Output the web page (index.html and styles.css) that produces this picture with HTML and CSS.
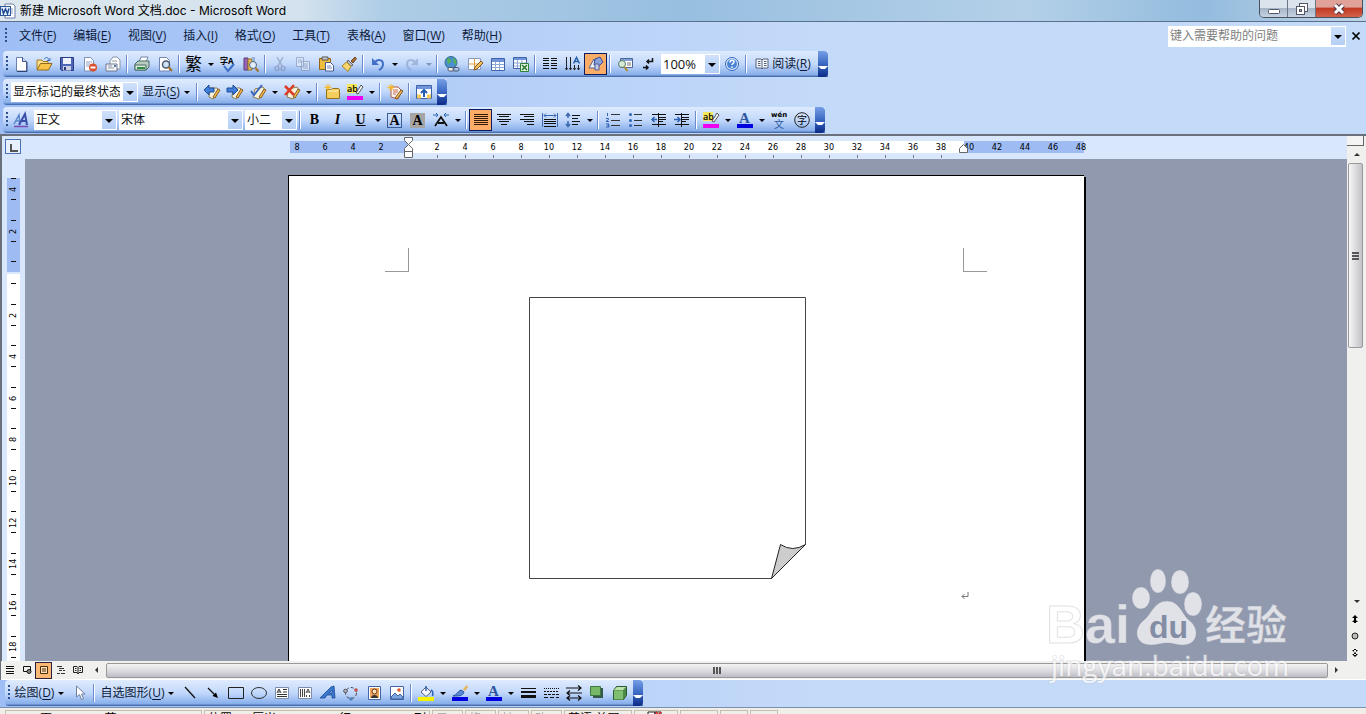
FILE: index.html
```html
<!DOCTYPE html>
<html lang="zh-CN">
<head>
	<meta charset="UTF-8">
	<title>新建 Microsoft Word 文档.doc - Microsoft Word</title>
	<link rel="stylesheet" href="styles.css">
</head>
<body>
	<header class="titlebar">
		<svg class="appicon" viewBox="0 0 16 16"><path d="M5 1h8l2 2v12H5z" fill="#fff" stroke="#6b7fa6"/><path d="M8 6h5M8 8h5M8 10h5" stroke="#8fa3c8"/><rect x=".5" y="3.500" width="10" height="9" fill="#e6eefb" stroke="#2b579a"/><path d="M2 5.500l1.500 5L5.500 6l2 4.500 1.500-5" fill="none" stroke="#1f4a94" stroke-width="1.500"/></svg>
		<h1>新建 Microsoft Word 文档.doc - Microsoft Word</h1>
		<div class="winbtns">
			<button aria-label="最小化"><svg viewBox="0 0 16 16"><rect x="2.500" y="8.500" width="11" height="4" rx="1" fill="#fff" stroke="#535666"/></svg></button>
			<button aria-label="还原"><svg viewBox="0 0 16 16"><rect x="5.500" y="2.500" width="8" height="8" fill="#fff" stroke="#535666"/><rect x="2.500" y="5.500" width="8" height="8" fill="#fff" stroke="#535666"/><rect x="5.500" y="8.500" width="2" height="2" fill="#aaa" stroke="#535666"/></svg></button>
			<button class="close" aria-label="关闭"><svg viewBox="0 0 16 16"><path d="M4 4l8 8M12 4l-8 8" stroke="#54384a" stroke-width="5"/><path d="M4 4l8 8M12 4l-8 8" stroke="#fff" stroke-width="3"/></svg></button>
		</div>
	</header>

	<div class="dock">
		<nav class="menubar">
			<i class="grip"></i>
			<a href="#">文件(<u>F</u>)</a>
			<a href="#">编辑(<u>E</u>)</a>
			<a href="#">视图(<u>V</u>)</a>
			<a href="#">插入(<u>I</u>)</a>
			<a href="#">格式(<u>O</u>)</a>
			<a href="#">工具(<u>T</u>)</a>
			<a href="#">表格(<u>A</u>)</a>
			<a href="#">窗口(<u>W</u>)</a>
			<a href="#">帮助(<u>H</u>)</a>
			<span class="combo ask"><input type="text" placeholder="键入需要帮助的问题" aria-label="键入需要帮助的问题"></span>
			<button class="docclose" aria-label="关闭文档"><svg viewBox="0 0 16 16"><path d="M4 4l8 8M12 4l-8 8" stroke="#000" stroke-width="2"/></svg></button>
		</nav>

		<!-- 常用 -->
		<div class="toolbar">
			<i class="grip"></i>
			<button aria-label="新建"><svg viewBox="0 0 16 16"><path d="M3.500 1.500h6l4 4v9.500h-10z" fill="#fff" stroke="#6a7fae"/><path d="M9.500 1.500v4h4" fill="#cfdcf5" stroke="#3f558c"/><path d="M4 15.500h10V6" stroke="#2e4377" fill="none"/></svg></button>
			<button aria-label="打开"><svg viewBox="0 0 16 16"><path d="M1 13V4h5l1 1.500h5V8" fill="#fbe08c" stroke="#a77b22"/><path d="M1 14l3.500-6.500H16L12.500 14z" fill="#f9c449" stroke="#96681b"/><path d="M8 3c2-2 4-2 5 1m1-2v2.500h-3" fill="none" stroke="#3c6fc0"/></svg></button>
			<button aria-label="保存"><svg viewBox="0 0 16 16"><path d="M1.500 1.500h13v13h-12l-1-1z" fill="#4d66b8" stroke="#2b3c84"/><path d="M4 2h8v6H4z" fill="#eef3ff"/><path d="M4 10h8v4.500H4z" fill="#cbd2e4"/><path d="M5 11h2v3H5z" fill="#26367b"/></svg></button>
			<button aria-label="权限"><svg viewBox="0 0 16 16"><path d="M2.500 1.500h6l3 3V15h-9z" fill="#fff" stroke="#7d8fb8"/><path d="M4 6h6M4 8h4M4 10h3" stroke="#8fa3c8"/><circle cx="11" cy="11.500" r="4" fill="#d9512c"/><path d="M8.500 11.500h5" stroke="#fff" stroke-width="2"/></svg></button>
			<button aria-label="电子邮件"><svg viewBox="0 0 16 16"><path d="M5 5l3-4h4l3 3v9H5z" fill="#fff" stroke="#8b93a7"/><path d="M1 8h11v7H1z" fill="#f4f6fa" stroke="#6c7690"/><path d="M3 10h4M3 12h6M7 5h5" stroke="#8b93a7"/><path d="M9 9h2v2H9z" fill="#5e78a8"/></svg></button>
			<i class="sep"></i>
			<button aria-label="打印"><svg viewBox="0 0 16 16"><path d="M5 6l2-5h7l-2 5z" fill="#fff" stroke="#7285a0"/><path d="M1 8l3-3h11v6l-3 3H1z" fill="#b7cdbf" stroke="#4a6a65"/><path d="M1 9h11v5H1z" fill="#dce9e0" stroke="#4a6a65"/><path d="M3 12h8" stroke="#2d9143" stroke-width="2"/></svg></button>
			<button aria-label="打印预览"><svg viewBox="0 0 16 16"><path d="M2.500 1.500h7l3 3V15h-10z" fill="#fff" stroke="#7285b0"/><circle cx="9" cy="8.500" r="3.500" fill="#cfe3f6" stroke="#4d5b70" stroke-width="1.500"/><path d="M11.500 11l3.500 4" stroke="#a4712a" stroke-width="2"/></svg></button>
			<i class="sep"></i>
			<button class="fan" aria-label="中文简繁转换">繁</button>
			<button class="drop" aria-label="更多"></button>
			<button aria-label="拼写和语法"><svg viewBox="0 0 16 16"><text x="0" y="8" class="tiny">字A</text><path d="M4 10l4 5 6-7" fill="none" stroke="#3b6cc4" stroke-width="2"/></svg></button>
			<button aria-label="信息检索"><svg viewBox="0 0 16 16"><path d="M1 2h4v12H1z" fill="#9a64b6" stroke="#5d3a78"/><path d="M5 3h4v11H5z" fill="#e8bf55" stroke="#97742a"/><path d="M9 1h3v8H9z" fill="#98b2dc"/><circle cx="10" cy="9" r="3.500" fill="#e2effb" stroke="#52627c"/><path d="M12.500 12l3 3.500" stroke="#a4712a" stroke-width="2"/></svg></button>
			<i class="sep"></i>
			<button class="off" aria-label="剪切"><svg viewBox="0 0 16 16"><path d="M5 1l5 9M11 1l-5 9" stroke="#8799bb" stroke-width="1.500"/><circle cx="5" cy="12.500" r="2" fill="none" stroke="#8799bb" stroke-width="1.500"/><circle cx="11" cy="12.500" r="2" fill="none" stroke="#8799bb" stroke-width="1.500"/></svg></button>
			<button class="off" aria-label="复制"><svg viewBox="0 0 16 16"><path d="M1.500 1.500h7v9h-7zM6.500 5.500h8v9h-8z" fill="#e2ebf8" stroke="#8799bb"/><path d="M3 4h4M3 6h3M8 8h5M8 10h5M8 12h5" stroke="#8799bb"/></svg></button>
			<button aria-label="粘贴"><svg viewBox="0 0 16 16"><path d="M1.500 2.500h11v11h-11z" fill="#efbd3e" stroke="#94661a"/><path d="M4 1h6v3H4z" fill="#c8c8c8" stroke="#555"/><path d="M7.500 6.500h5l3 3V15h-8z" fill="#fff" stroke="#475c93"/><path d="M9 10h4M9 12h5" stroke="#6e86c0"/></svg></button>
			<button aria-label="格式刷"><svg viewBox="0 0 16 16"><path d="M10 5l4-4 1.500 1.500L12 7z" fill="#a86b31" stroke="#70431b"/><path d="M7 4l5 5-2 1-4-4z" fill="#b9bfca" stroke="#666"/><path d="M5.500 6l4.500 4.500-3 5L1 10z" fill="#f6d56c" stroke="#a98326"/></svg></button>
			<i class="sep"></i>
			<button aria-label="撤消"><svg viewBox="0 0 16 16"><path d="M4 7c4-5 9-3 9 1 0 3-2 5-4 6" fill="none" stroke="#416fc8" stroke-width="2"/><path d="M2 2v7h7z" fill="#416fc8"/></svg></button>
			<button class="drop" aria-label="更多"></button>
			<button class="off" aria-label="恢复"><svg viewBox="0 0 16 16"><path d="M12 7C8 2 3 4 3 8c0 3 2 5 4 6" fill="none" stroke="#8fa6cf" stroke-width="2"/><path d="M14 2v7H7z" fill="#8fa6cf"/></svg></button>
			<button class="drop off" aria-label="更多"></button>
			<i class="sep"></i>
			<button aria-label="插入超链接"><svg viewBox="0 0 16 16"><circle cx="7" cy="6.500" r="6" fill="#4b8fcf" stroke="#336a8a"/><path d="M3 3c3-2 4 0 4 2s-3 2-3 4M9 2c3 1 4 4 3 7-2-1-3-4-3-7" fill="#52b257"/><rect x="4" y="11.500" width="6" height="3.500" rx="1.500" fill="#eee" stroke="#4b5468"/><rect x="9" y="11.500" width="6" height="3.500" rx="1.500" fill="none" stroke="#4b5468"/></svg></button>
			<button aria-label="表格和边框"><svg viewBox="0 0 16 16"><path d="M1.500 2.500h12v11h-12z" fill="#fff" stroke="#8d99b8"/><path d="M7.500 3v10M2 8h11" stroke="#e0a040"/><path d="M7 14l1-3 6-6 2 2-6 6z" fill="#f2c15b" stroke="#84551c"/></svg></button>
			<button aria-label="插入表格"><svg viewBox="0 0 16 16"><path d="M1.500 2.500h13v12h-13z" fill="#fff" stroke="#3f62a8"/><path d="M2 3h12v3H2z" fill="#6f94da"/><path d="M5.500 6v8M9.500 6v8M2 8.500h12M2 11.500h12" stroke="#8ea8d8"/></svg></button>
			<button aria-label="插入 Excel 表格"><svg viewBox="0 0 16 16"><path d="M.5 1.500h13v11H.5z" fill="#fff" stroke="#3f62a8"/><path d="M1 2h12v2H1z" fill="#6f94da"/><path d="M4.500 4v8M9 4v8M1 7h12M1 10h12" stroke="#8ea8d8"/><path d="M7.500 7.500h8v8h-8z" fill="#e5f3e4" stroke="#2f7f37"/><path d="M9 9l5 5M14 9l-5 5" stroke="#24792d" stroke-width="1.500"/></svg></button>
			<i class="sep"></i>
			<button aria-label="分栏"><svg viewBox="0 0 16 16"><path d="M1 2.500h6M1 4.500h6M1 7.500h6M1 9.500h6M1 12.500h6M9 2.500h6M9 4.500h6M9 7.500h6M9 9.500h6M9 12.500h6" stroke="#111"/></svg></button>
			<button aria-label="更改文字方向"><svg viewBox="0 0 16 16"><path d="M1.500 1v13M5.500 1v13M9.500 9v5M13.500 9v5M.5 12l1 2 1-2M4.500 12l1 2 1-2M8.500 12l1 2 1-2M12.500 12l1 2 1-2" fill="none" stroke="#222"/><path d="M8.500 7.500l3-6 3 6M9.500 5.500h4" fill="none" stroke="#2860a8" stroke-width="1.500"/></svg></button>
			<button class="on" aria-label="绘图"><svg viewBox="0 0 16 16"><path d="M1 12L6 3l3 9z" fill="#f0f2fa" stroke="#56648f"/><path d="M7 3l5-2 3 5-4 4-5-1z" fill="#8ba1dc" stroke="#3d4f8e"/><path d="M7 8h4v6H7z" fill="#c3cbea" stroke="#50609a"/></svg></button>
			<i class="sep"></i>
			<button aria-label="文档结构图"><svg viewBox="0 0 16 16"><path d="M3.500 2.500h12v9h-12z" fill="#fff" stroke="#4d6690"/><path d="M4 3h11v2H4z" fill="#7fa0d8"/><path d="M10 7h4M10 9h4" stroke="#777"/><circle cx="5" cy="8" r="3.500" fill="#d6ecd6" stroke="#5a7a6a"/><path d="M7.500 11l3 4" stroke="#b58a32" stroke-width="2"/></svg></button>
			<button aria-label="显示/隐藏编辑标记"><svg viewBox="0 0 16 16"><path d="M12.500 2v3.500H7m2-2L7 5.500l2 2M3 11.500h5M6 9.500l2 2-2 2" fill="none" stroke="#111" stroke-width="1.500"/></svg></button>
			<span class="combo zoom"><select aria-label="显示比例"><option>100%</option></select></span>
			<button aria-label="帮助"><svg viewBox="0 0 16 16"><circle cx="8" cy="8" r="6.500" fill="#e4efff" stroke="#2e66b8"/><circle cx="8" cy="8" r="5" fill="#4b84d4"/><path d="M6 6.500c0-3 4-3 4-.5 0 1.500-2 1.500-2 3" fill="none" stroke="#fff" stroke-width="1.500"/><path d="M7.200 10.500h1.600v1.500H7.200z" fill="#fff"/></svg></button>
			<i class="sep"></i>
			<button class="text read"><svg viewBox="0 0 16 16"><path d="M2 3h5l1 1 1-1h5v9H9l-1 1-1-1H2z" fill="#f5f7fc" stroke="#55617c"/><path d="M8 4v9M4 5.500h2.500M4 7.500h2.500M4 9.500h2.500M10 5.500h2.500M10 7.500h2.500M10 9.500h2.500" stroke="#55617c"/></svg><span>阅读(<u>R</u>)</span></button>
			<button class="more" aria-label="工具栏选项"></button>
		</div>

		<!-- 审阅 -->
		<div class="toolbar">
			<i class="grip"></i>
			<span class="combo review"><select aria-label="显示以审阅"><option>显示标记的最终状态</option></select></span>
			<button class="text caret show"><span>显示(<u>S</u>)</span></button>
			<i class="sep"></i>
			<button aria-label="前一处修订"><svg viewBox="0 0 16 16"><path d="M6 4h7l2 2-6 9-4-2z" fill="#f6f2dc" stroke="#8c7b50"/><path d="M9 13l5-8 2 1-5 8z" fill="#efb94c" stroke="#8b5d21"/><path d="M0 6l5-5v3h5v4H5v3z" fill="#3f7fdb" stroke="#1c4a97"/></svg></button>
			<button aria-label="后一处修订"><svg viewBox="0 0 16 16"><path d="M6 4h7l2 2-6 9-4-2z" fill="#f6f2dc" stroke="#8c7b50"/><path d="M9 13l5-8 2 1-5 8z" fill="#efb94c" stroke="#8b5d21"/><path d="M11 6L6 1v3H0v4h6v3z" fill="#3f7fdb" stroke="#1c4a97"/></svg></button>
			<button aria-label="接受所选修订"><svg viewBox="0 0 16 16"><path d="M5 5l8-2 2 3-6 9-6-2z" fill="#f6f2dc" stroke="#8c7b50"/><path d="M9 13l5-8 2 1-5 8z" fill="#efb94c" stroke="#8b5d21"/><path d="M1 7l3 4 8-10" fill="none" stroke="#3a66c0" stroke-width="2"/></svg></button>
			<button class="drop" aria-label="更多"></button>
			<button aria-label="拒绝所选修订"><svg viewBox="0 0 16 16"><path d="M5 5l8-2 2 3-6 9-6-2z" fill="#f6f2dc" stroke="#8c7b50"/><path d="M9 13l5-8 2 1-5 8z" fill="#efb94c" stroke="#8b5d21"/><path d="M1 2l9 9M10 1L1 11" stroke="#de3b25" stroke-width="2.500"/></svg></button>
			<button class="drop" aria-label="更多"></button>
			<i class="sep"></i>
			<button aria-label="插入批注"><svg viewBox="0 0 16 16"><path d="M2.500 5.500h5l1-1h6l1 1v9h-13z" fill="#f5cd5c" stroke="#94701f"/><path d="M4 7h10" stroke="#fff4b8"/><path d="M4 0v7M.5 3.500h7M1.500 1l5 5M6.500 1l-5 5" stroke="#f6b923"/></svg></button>
			<button aria-label="突出显示"><svg viewBox="0 0 16 16"><path d="M0 0h10v9H0z" fill="#f5e85b"/><text x="0" y="8" class="ab">ab</text><path d="M9 9l5-8 2 2-5 7z" fill="#f4f4f4" stroke="#555"/><path d="M0 12h16v4H0z" fill="#f000f0"/></svg></button>
			<button class="drop" aria-label="更多"></button>
			<i class="sep"></i>
			<button aria-label="修订"><svg viewBox="0 0 16 16"><path d="M4 3h7l4 4-4 8-7-2z" fill="#fff5f0" stroke="#b05c48"/><path d="M6 6h5M6 8h5M6 10h3" stroke="#c76b56"/><path d="M8 14l6-8 2 1-6 8z" fill="#f2c15b" stroke="#84551c"/><path d="M4 0v7M.5 3.500h7M1.500 1l5 5M6.500 1l-5 5" stroke="#f6b923"/></svg></button>
			<i class="sep"></i>
			<button aria-label="审阅窗格"><svg viewBox="0 0 16 16"><path d="M.5 1.500h15v13H.5z" fill="#fff" stroke="#3c61a8"/><path d="M1 2h14v3H1z" fill="#6f94da"/><path d="M1 10.500h4v4H1zM11 10.500h4v4h-4z" fill="#f5cd5c"/><path d="M8 13V7M5 9l3-3 3 3" fill="none" stroke="#275cb4" stroke-width="2"/></svg></button>
			<button class="more" aria-label="工具栏选项"></button>
		</div>

		<!-- 格式 -->
		<div class="toolbar">
			<i class="grip"></i>
			<button aria-label="格式窗格"><svg viewBox="0 0 16 16"><path d="M1 12L6 3l1 9M3 9h4" fill="none" stroke="#5c86cc" stroke-width="1.500"/><path d="M6 13l6-11 2 11M8.500 9H13" fill="none" stroke="#3c4fa8" stroke-width="2"/><path d="M1 14.500h14" stroke="#7a4bb0" stroke-width="1.500"/></svg></button>
			<span class="combo style"><select aria-label="样式"><option>正文</option></select></span>
			<span class="combo font"><select aria-label="字体"><option>宋体</option></select></span>
			<span class="combo size"><select aria-label="字号"><option>小二</option></select></span>
			<i class="sep"></i>
			<button class="glyph b">B</button>
			<button class="glyph i">I</button>
			<button class="glyph un">U</button>
			<button class="drop" aria-label="更多"></button>
			<button class="glyph"><span class="boxed">A</span></button>
			<button class="glyph"><span class="shaded">A</span></button>
			<button aria-label="字符缩放"><svg viewBox="0 0 16 16"><path d="M2 14l6-9 6 9M5 11h6" fill="none" stroke="#111" stroke-width="1.800"/><path d="M0 3h5M3 1l2 2-2 2M16 3h-5M13 1l-2 2 2 2" fill="none" stroke="#2766b8"/></svg></button>
			<button class="drop" aria-label="更多"></button>
			<i class="sep"></i>
			<button class="on" aria-label="两端对齐"><svg viewBox="0 0 16 16"><path d="M1 2.500h14M1 4.500h14M1 6.500h14M1 8.500h14M1 10.500h14M1 12.500h14" stroke="#331a08"/></svg></button>
			<button aria-label="居中"><svg viewBox="0 0 16 16"><path d="M1 2.500h14M3 4.500h10M1 7.500h14M3 9.500h10M5 12.500h6" stroke="#111"/></svg></button>
			<button aria-label="右对齐"><svg viewBox="0 0 16 16"><path d="M1 2.500h14M5 4.500h10M1 7.500h14M5 9.500h10M8 12.500h7" stroke="#111"/></svg></button>
			<button aria-label="分散对齐"><svg viewBox="0 0 16 16"><path d="M.5 1v14M15.500 1v14" stroke="#3b68b0"/><path d="M2 3.500h12M4 1.500l-2 2 2 2M12 1.500l2 2-2 2" fill="none" stroke="#3b68b0"/><path d="M2 7.500h12M2 9.500h12M2 11.500h12M2 14.500h12" stroke="#111"/></svg></button>
			<button aria-label="行距"><svg viewBox="0 0 16 16"><path d="M3 2v4M3 9v5M1 4l2-2.500L5 4M1 12l2 2.500L5 12" fill="none" stroke="#3b68b0" stroke-width="1.500"/><path d="M7 3.500h8M7 6.500h6M7 9.500h8M7 12.500h6" stroke="#111"/></svg></button>
			<button class="drop" aria-label="更多"></button>
			<i class="sep"></i>
			<button aria-label="编号"><svg viewBox="0 0 16 16"><path d="M2.500 1v3M1 6.500h2.500v1L1 9.500h3M1 12h3l-1.500 1.500H4V15H1" fill="none" stroke="#2d62b4"/><path d="M6 2.500h9M6 8.500h9M6 13.500h9" stroke="#333"/></svg></button>
			<button aria-label="项目符号"><svg viewBox="0 0 16 16"><circle cx="2.500" cy="2.500" r="1.500" fill="#2d62b4"/><circle cx="2.500" cy="8.500" r="1.500" fill="#2d62b4"/><circle cx="2.500" cy="13.500" r="1.500" fill="#2d62b4"/><path d="M6 2.500h8M6 8.500h8M6 13.500h8" stroke="#333"/></svg></button>
			<button aria-label="减少缩进量"><svg viewBox="0 0 16 16"><path d="M1 2.500h14M8 5.500h7M8 7.500h7M8 9.500h4M1 12.500h14M7.500 1v14" stroke="#111"/><path d="M6 7.500H1M3.500 5L1 7.500 3.500 10" fill="none" stroke="#2d62b4" stroke-width="1.500"/></svg></button>
			<button aria-label="增加缩进量"><svg viewBox="0 0 16 16"><path d="M1 2.500h14M8 5.500h7M8 7.500h7M8 9.500h4M1 12.500h14M7.500 1v14" stroke="#111"/><path d="M0 7.500h6M3.500 5L6 7.500 3.500 10" fill="none" stroke="#2d62b4" stroke-width="1.500"/></svg></button>
			<i class="sep"></i>
			<button aria-label="突出显示"><svg viewBox="0 0 16 16"><path d="M0 0h10v9H0z" fill="#f5e85b"/><text x="0" y="8" class="ab">ab</text><path d="M9 9l5-8 2 2-5 7z" fill="#f4f4f4" stroke="#555"/><path d="M0 12h16v4H0z" fill="#f000f0"/></svg></button>
			<button class="drop" aria-label="更多"></button>
			<button aria-label="字体颜色"><svg viewBox="0 0 16 16"><text x="2" y="11" class="bigA">A</text><path d="M0 12h16v4H0z" fill="#0000e0"/></svg></button>
			<button class="drop" aria-label="更多"></button>
			<button aria-label="拼音指南"><svg viewBox="0 0 16 16"><text x="0" y="5" class="wen">wén</text><text x="3" y="16" class="wz">文</text></svg></button>
			<button aria-label="带圈字符"><svg viewBox="0 0 16 16"><circle cx="8" cy="8" r="7.300" fill="none" stroke="#222"/><text x="3" y="12" class="zi">字</text></svg></button>
			<button class="more" aria-label="工具栏选项"></button>
		</div>
	</div>

	<main class="work">
		<div class="corner"><span class="tabstop"></span></div>
		<div class="hruler">
			<div class="hz out left"><b>8</b><b>6</b><b>4</b><b>2</b>
				<svg class="indent" viewBox="0 0 10 22"><path d="M.5.500h8v3l-4 4-4-4zM.5 14.500v-3l4-4 4 4v3zM.5 14.500h8v6h-8z" fill="#fff" stroke="#666"/></svg>
			</div>
			<div class="hz mid"><b>2</b><b>4</b><b>6</b><b>8</b><b>10</b><b>12</b><b>14</b><b>16</b><b>18</b><b>20</b><b>22</b><b>24</b><b>26</b><b>28</b><b>30</b><b>32</b><b>34</b><b>36</b><b>38</b></div>
			<div class="hz out right"><b>40</b><b>42</b><b>44</b><b>46</b><b>48</b>
				<svg class="rindent" viewBox="0 0 10 10"><path d="M.5 8.500v-4l4-4 4 4v4z" fill="#fff" stroke="#666"/></svg>
			</div>
		</div>
		<div class="vscroll">
			<span class="split"></span>
			<button class="arr up" aria-label="向上"></button>
			<span class="thumb"><i class="bars"></i></span>
			<span class="track"></span>
			<button class="arr down" aria-label="向下"></button>
			<button class="nav" aria-label="前一页"><svg viewBox="0 0 10 10"><path d="M5 1l3 3H2zM5 5l3 3H2zM4 3h2v6H4z"/></svg></button>
			<button class="nav" aria-label="选择浏览对象"><svg viewBox="0 0 10 10"><circle cx="5" cy="5" r="3" fill="#bbb" stroke="#222"/></svg></button>
			<button class="nav" aria-label="下一页"><svg viewBox="0 0 10 10"><path d="M5 5l3-3H2zM5 9l3-3H2zM4 1h2v6H4z"/></svg></button>
		</div>
		<div class="vruler">
			<div class="vz out"><b>4</b><b>2</b><b class="half"></b></div>
			<div class="vz"><b class="half"></b><b>2</b><b>4</b><b>6</b><b>8</b><b>10</b><b>12</b><b>14</b><b>16</b><b>18</b></div>
		</div>
		<div class="canvas">
			<div class="page">
				<div class="marks"><i class="ml"></i><i class="mr"></i></div>
				<svg class="note" viewBox="0 0 278 283"><path d="M.5.500h276v247l-34 34H.5z" fill="#fff" stroke="#444"/><path d="M242.500 281.500l9-34q12 8 25 0z" fill="#cdcdcd" stroke="#222"/></svg>
				<svg class="ret" viewBox="0 0 8 8"><path d="M7 0v4.500H1M3.500 2L1 4.500 3.500 7" fill="none" stroke="#777"/></svg>
			</div>
		</div>
		<div class="hscroll">
			<button aria-label="普通视图"><svg viewBox="0 0 10 10"><path d="M1 1.500h8M1 3.500h8M1 6.500h8M1 8.500h8" stroke="#111"/></svg></button>
			<button aria-label="Web 版式视图"><svg viewBox="0 0 10 10"><path d="M1.500 1.500h7v5h-7z" fill="none" stroke="#111"/><circle cx="7" cy="6.500" r="2" fill="#888" stroke="#111"/></svg></button>
			<button class="on" aria-label="页面视图"><svg viewBox="0 0 10 10"><path d="M1.500 1.500h7v7h-7z" fill="#ffe2ba" stroke="#4a2d08"/><path d="M3 4h4M3 6h4" stroke="#4a2d08"/></svg></button>
			<button aria-label="大纲视图"><svg viewBox="0 0 10 10"><path d="M1 1.500h5M3 3.500h5M7 5.500h2M3 5.500h3M1 8.500h3M5 8.500h4" stroke="#333"/></svg></button>
			<button aria-label="阅读版式"><svg viewBox="0 0 10 10"><path d="M.5 1.500H4l1 1 1-1h3.500v6H6l-1 1.500-1-1.500H.5zM5 2.500v6M2 3.500h1.500M2 5.500h1.500M6.500 3.500H8M6.500 5.500H8" fill="none" stroke="#222"/></svg></button>
			<button class="arr prev" aria-label="向左"></button>
			<span class="thumb"><i class="bars"></i></span>
			<button class="arr next" aria-label="向右"></button>
		</div>
	</main>

	<!-- 绘图 -->
	<div class="drawdock">
		<div class="toolbar">
			<i class="grip"></i>
			<button class="text caret draw"><span>绘图(<u>D</u>)</span></button>
			<button aria-label="选择对象"><svg viewBox="0 0 16 16"><path d="M4.500 1v11l3-2.500 2 5 2-1-2-4.500h3.500z" fill="#fff" stroke="#6f7f9d"/></svg></button>
			<i class="sep"></i>
			<button class="text caret shapes"><span>自选图形(<u>U</u>)</span></button>
			<button aria-label="直线"><svg viewBox="0 0 16 16"><path d="M3 2l10 11" stroke="#111" stroke-width="1.300"/></svg></button>
			<button aria-label="箭头"><svg viewBox="0 0 16 16"><path d="M3 3l8 8" stroke="#111" stroke-width="1.300"/><path d="M13 13L7.500 11l3.500-3.500z"/></svg></button>
			<button aria-label="矩形"><svg viewBox="0 0 16 16"><path d="M.5 2.500h15v11H.5z" fill="none" stroke="#222"/></svg></button>
			<button aria-label="椭圆"><svg viewBox="0 0 16 16"><ellipse cx="8" cy="8" rx="7.500" ry="5.500" fill="none" stroke="#333"/></svg></button>
			<button aria-label="文本框"><svg viewBox="0 0 16 16"><path d="M1.500 2.500h13v11h-13z" fill="#fff" stroke="#7d8bac"/><path d="M3 8l2-4 2 4M4 7h2M9 4.500h4M9 7h4M3 9.500h10M3 11.500h10" fill="none" stroke="#333"/></svg></button>
			<button aria-label="竖排文本框"><svg viewBox="0 0 16 16"><path d="M1.500 2.500h13v11h-13z" fill="#fff" stroke="#7d8bac"/><path d="M9 8l2-4 2 4M10 7h2M3.500 4v8M5.500 4v8M7.500 4v8M9.500 10v2M12.500 10v2" fill="none" stroke="#444"/></svg></button>
			<button aria-label="艺术字"><svg viewBox="0 0 16 16"><path d="M0 13L11 2l3-1 1 12h-3v-3H7l-2 3zM9 8h3V5z" fill="#3a78cf" stroke="#1d4a94" stroke-width=".800"/></svg></button>
			<button aria-label="组织结构图"><svg viewBox="0 0 16 16"><circle cx="8" cy="8" r="5.500" fill="none" stroke="#444" stroke-dasharray="3 2"/><circle cx="2.500" cy="6" r="1.800" fill="#b0b6c8" stroke="#555"/><circle cx="13" cy="5" r="1.800" fill="#c0504d"/><circle cx="8" cy="14" r="1.800" fill="#4f81bd"/></svg></button>
			<button aria-label="剪贴画"><svg viewBox="0 0 16 16"><path d="M2.500 1.500h12v13h-12z" fill="#fff" stroke="#4465a5"/><path d="M4 3h9v10H4z" fill="#f3a45c"/><circle cx="8.500" cy="6.500" r="2.500" fill="#ffdfb8" stroke="#6b3714"/><path d="M5 13c0-4 7-4 7 0z" fill="#333"/></svg></button>
			<button aria-label="插入图片"><svg viewBox="0 0 16 16"><path d="M1.500 1.500h13v13h-13z" fill="#fff" stroke="#4465a5"/><circle cx="10" cy="5" r="1.800" fill="#e05a2a"/><path d="M2 12l4-4 3 3 2-2 3 3v2H2z" fill="#7ca5df" stroke="#3f63a0"/></svg></button>
			<i class="sep"></i>
			<button aria-label="填充颜色"><svg viewBox="0 0 16 16"><path d="M3 7l5-5 5 5-5 4.500z" fill="#f4f7fd" stroke="#53617f"/><path d="M8 1v5M13 5c2 1 2 4 1.500 6" fill="none" stroke="#2f62b8" stroke-width="1.500"/><path d="M0 12h16v4H0z" fill="#f4f400"/></svg></button>
			<button class="drop" aria-label="更多"></button>
			<button aria-label="线条颜色"><svg viewBox="0 0 16 16"><path d="M1 11c4-1 5-5 8-6l3 2c-1 4-5 4-11 4z" fill="#5c8bd6" stroke="#29539c"/><path d="M11 4l4-4 1 2-3 4z" fill="#e7b25a"/><path d="M0 12h16v4H0z" fill="#0000e0"/></svg></button>
			<button class="drop" aria-label="更多"></button>
			<button aria-label="字体颜色"><svg viewBox="0 0 16 16"><text x="2" y="11" class="bigA">A</text><path d="M0 12h16v4H0z" fill="#0000e0"/></svg></button>
			<button class="drop" aria-label="更多"></button>
			<button aria-label="线型"><svg viewBox="0 0 16 16"><path d="M1 3.500h15" stroke="#111"/><path d="M1 7h15" stroke="#111" stroke-width="2"/><path d="M1 11.500h15" stroke="#111" stroke-width="3"/></svg></button>
			<button aria-label="虚线线型"><svg viewBox="0 0 16 16"><path d="M1 3.500h15" stroke="#111" stroke-dasharray="1 1"/><path d="M1 6.500h15" stroke="#111" stroke-dasharray="2 1"/><path d="M1 9.500h15" stroke="#111" stroke-dasharray="3 1"/><path d="M1 12.500h15" stroke="#111" stroke-dasharray="4 2"/></svg></button>
			<button aria-label="箭头样式"><svg viewBox="0 0 16 16"><path d="M0 3h15M12 .5L15 3l-3 2.500M1 8h15M4 5.500L1 8l3 2.500M1 13h14M4 10.500L1 13l3 2.500M12 10.500l3 2.500-3 2.500" fill="none" stroke="#111" stroke-width="1.200"/></svg></button>
			<button aria-label="阴影样式"><svg viewBox="0 0 16 16"><path d="M4 3h10v10H4z" fill="#35584a"/><path d="M1.500 1.500h10v9h-10z" fill="#77b867" stroke="#3d7741"/></svg></button>
			<button aria-label="三维效果样式"><svg viewBox="0 0 16 16"><path d="M1.500 5.500l3-4h10v9l-3 4h-10z" fill="#4c8a48" stroke="#285c30"/><path d="M2 5.500h9v9H2z" fill="#80bf70"/><path d="M2 5l3-3h9l-3 3z" fill="#bfe3ad"/></svg></button>
			<button class="more" aria-label="工具栏选项"></button>
		</div>
	</div>

	<footer class="status">
		<span class="s1"><em>1 页</em><em>1 节</em><em>1/1</em></span>
		<span class="s2"><em>位置 2.5厘米</em><em>1 行</em><em>1 列</em></span>
		<span class="dim">录制</span><span class="dim">修订</span><span class="dim">扩展</span><span class="dim">改写</span>
		<span class="lang">英语(美国)</span>
		<span class="spell"><svg viewBox="0 0 16 16"><path d="M1 1h7v9H1zM8 1h6v9H8z" fill="#fff" stroke="#222"/><path d="M9 1l5 6M14 1L9 7" stroke="#d22" stroke-width="1.500"/></svg></span>
		<span class="box"></span><span class="box sm"></span><span class="box sm"></span>
	</footer>

	<svg class="watermark" viewBox="0 0 260 130">
		<g class="mark">
			<text x="6" y="83" class="bai">Bai</text>
			<ellipse cx="101" cy="38" rx="9" ry="11"/><ellipse cx="118" cy="21" rx="8" ry="12"/><ellipse cx="140" cy="22" rx="9" ry="12"/><ellipse cx="153" cy="44" rx="9" ry="12"/>
			<path d="M127 41c13 0 15 14 23 20 10 8 8 24-7 24-7 0-9-2-16-2s-9 2-16 2c-16 0-18-16-8-24 9-7 11-20 24-20z"/>
			<text x="165" y="80" class="jy">经验</text>
		</g>
		<text x="11" y="116" class="url">jingyan.baidu.com</text>
		<text x="109" y="78" class="du">du</text>
	</svg>
</body>
</html>
```
FILE: styles.css
```css
*{box-sizing: border-box;}
html, body{height: 100%;}
body{margin: 0; display: flex; flex-direction: column; overflow: hidden; background: #c4daf9;
	font: 12px/16px "Open Sans", "Noto Sans CJK SC", sans-serif; color: #0c1a38;}
button{font: inherit; color: inherit; border: 0; padding: 0; margin: 0; background: none;}
i{font-style: normal;}
svg{display: block;}
input, select{font: inherit; color: #111; border: 0; margin: 0; border-radius: 0; outline: 0; appearance: none;}

/* 标题栏 */
.titlebar{flex: none; height: 22px; display: flex; align-items: center; border-bottom: 1px solid #5b6f8c;
	background: linear-gradient(90deg, #dde7ee 0, #d3e2ee 22%, #aecde6 28%, #98bfe0 50%, #b4d0e8 75%, #93bcde 88%, #c0d4e6 100%);}
.appicon{width: 16px; height: 16px; margin-right: 4px;}
.titlebar h1{margin: 0; font: 12px/16px Inter, "Noto Sans CJK SC", sans-serif; color: #000; flex: 1;}
.winbtns{display: flex; align-self: flex-start; height: 18px; margin-right: 3px;
	border: 1px solid #49515f; border-top: 0; border-radius: 0 0 5px 5px; overflow: hidden;}
.winbtns button{width: 28px; height: 17px; display: flex; align-items: center; justify-content: center;
	border-right: 1px solid #6b7686; background: linear-gradient(#dbe4ec 45%, #a7b6c8 50%, #c5d3e2);}
.winbtns .close{width: 46px; border-right: 0; background: linear-gradient(#e0a198 40%, #c23a24 50%, #d2624a);}
.winbtns svg{width: 16px; height: 16px;}

/* 菜单和工具栏 */
.dock{flex: none; display: flex; flex-direction: column; border-bottom: 2px solid #69707c;
	background: linear-gradient(90deg, #9ebef5, #c4daf9 60%);}
.menubar{height: 28px; display: flex; align-items: center; padding-left: 3px;}
.menubar a{color: #0c1a38; text-decoration: none; padding: 0 9px 0 8px;}
u{text-underline-offset: 2px;}
.grip{flex: none; width: 6px; height: 16px; margin-left: 2px;
	background: repeating-linear-gradient(#2f4f8e 0 2px, transparent 2px 4px) left / 2px 100% no-repeat;}
.toolbar{height: 26px; width: max-content; margin: 1px 0 1px 3px; display: flex; align-items: center; border-radius: 4px 0 0 4px;
	background: linear-gradient(#dfebfe, #c2d8fb 50%, #86aeea 92%, #4a6fae 97%);}
.toolbar .grip{margin-left: 3px; width: 3px;}
.toolbar button{flex: none; width: 23px; height: 22px; display: flex; align-items: center; justify-content: center;}
.toolbar svg{width: 16px; height: 16px; overflow: visible;}
.toolbar .on{background: #fbac66; border: 1px solid #0c1c64;}
.toolbar .off svg{opacity: .7;}
.toolbar .drop{width: 11px;}
.toolbar .drop::before, .caret::after, .combo::after{content: ""; border: 3px solid transparent; border-top-color: #000; border-bottom: 0;}
.toolbar .drop.off::before{border-top-color: #8095bd;}
.sep{flex: none; width: 6px; height: 18px; background: linear-gradient(90deg, #6a8ccb 50%, #fff 50%) center / 2px 100% no-repeat;}
.toolbar .more{width: 10px; height: 26px; margin-left: 2px; border-radius: 0 4px 4px 0; align-items: flex-end; padding-bottom: 3px;
	background: linear-gradient(#769fe6, #3a68c2 50%, #0a2a86);}
.more::before{content: ""; width: 6px; height: 5px; border: 3px solid transparent; border-top-color: #fff; border-bottom: 0;
	background: linear-gradient(#fff, #fff) top / 6px 1px no-repeat border-box;}
.toolbar .text{white-space: nowrap;}
.toolbar .read{width: 67px; gap: 2px;}
.toolbar .show{width: 56px;}
.toolbar .draw{width: 57px;}
.toolbar .shapes{width: 81px;}
.caret::after{margin-left: 4px;}
.toolbar .fan{font-size: 17px; color: #000;}

.combo{position: relative; height: 20px; background: #fff;}
.combo select, .combo input{display: block; width: 100%; height: 20px; padding: 0 18px 0 2px; line-height: 18px;
	background: linear-gradient(#cfe0fa, #b4cef5) right 1px center / 14px 18px no-repeat #fff;}
.combo::after{position: absolute; right: 4px; top: 9px; border-width: 4px; border-bottom: 0; pointer-events: none;}
.combo.zoom{width: 59px; margin-left: 2px;}
.combo.zoom select{font-size: 13px;}
.combo.review{width: 127px; margin-left: 2px;}
.combo.style{width: 83px; margin: 0 2px;}
.combo.font{width: 124px; margin-right: 2px;}
.combo.size{width: 52px;}
.combo.ask{width: 178px; height: 21px; margin-left: auto;}
.ask input::placeholder{color: #808080; opacity: 1;}
.docclose{width: 20px;}
.docclose svg{width: 14px; height: 14px; margin: 0 auto;}

.toolbar .glyph{font: bold 14px/16px "Liberation Serif", serif; color: #000;}
.toolbar .glyph.i{font-style: italic;}
.toolbar .glyph.un{text-decoration: underline;}
.boxed, .shaded{width: 15px; height: 15px; line-height: 15px;}
.boxed{border: 1px solid #3a5c98; line-height: 13px;}
.shaded{background: #a5a5a5;}
.tiny{font-size: 8px; font-weight: bold;}
.ab{font-size: 9px; font-weight: 600;}
.bigA{font: bold 15px "Liberation Serif", serif; fill: #2c57a0;}
.wen{font: bold 7px "DejaVu Sans", sans-serif;}
.wz{font-size: 10px; fill: #2c57a0;}
.zi{font-size: 10px;}

/* 文档区 */
.work{flex: 1; min-height: 0; display: grid; grid-template: 23px 1fr 19px / 23px 1fr 19px; border-left: 2px solid #69707c; background: #d8e7fc;}
.corner{padding: 3px;}
.tabstop{display: block; width: 16px; height: 15px; border: 1px solid #4a72b4; background: #e8f0fd;}
.tabstop::after{content: ""; display: block; width: 6px; height: 6px; margin: 4px; border: solid #555; border-width: 0 0 2px 2px;}
.hruler{display: flex; justify-content: center; padding: 5px 0 0 2px; overflow: hidden;}
.hz{height: 12px; display: flex; position: relative; background: #fff;}
.hz b, .vz b{font: 9px/12px "DejaVu Sans Condensed", "DejaVu Sans", sans-serif; color: #000;}
.hz b{flex: none; width: 28px; text-align: center;}
.hz.out, .vz.out{background: #9ebbf3;}
.left{width: 119px; justify-content: flex-end; padding-right: 14px;}
.mid{width: 555px; padding-left: 14px;}
.mid b{height: 17px; background: linear-gradient(#778, #778) center bottom / 1px 3px no-repeat;}
.right{width: 120px;}
.right b:first-child{margin-left: -9px;}
.indent{position: absolute; right: -5px; top: -4px; width: 10px; height: 22px; z-index: 1;}
.rindent{position: absolute; left: -5px; top: 3px; width: 10px; height: 10px;}
.vruler{grid-row: 2; overflow: hidden; padding: 19px 0 0 5px;}
.vz{width: 13px; display: flex; flex-direction: column; background: #fff; overflow: hidden;}
.vz.out{height: 94px; justify-content: flex-end; margin-bottom: 2px;}
.vz b{flex: none; height: 42px; writing-mode: vertical-rl; transform: rotate(180deg); text-align: center; line-height: 13px;
	background: linear-gradient(#111, #111) center 10px / 5px 1px no-repeat, linear-gradient(#111, #111) center 31px / 5px 1px no-repeat;}
.vz b:nth-child(odd){height: 41px;}
.vz .half:nth-child(n){height: 20px; background-size: 5px 1px, 0 0;}
.canvas{background: #9099ae; overflow: hidden;}
.page{position: relative; width: 796px; height: 1100px; margin: 16px auto 0; padding: 72px 97px 0 96px; background: #fff;
	border: solid #000; border-width: 1px 0 0 1px; box-shadow: 2px 2px 0 #000;}
.marks{display: flex; justify-content: space-between;}
.marks i{width: 24px; height: 24px; border-bottom: 1px solid #999;}
.ml{border-right: 1px solid #999;}
.mr{border-left: 1px solid #999;}
.note{position: absolute; left: 240px; top: 121px; width: 278px; height: 283px;}
.ret{position: absolute; left: 672px; top: 416px; width: 8px; height: 8px;}

/* 滚动条 */
.vscroll{grid-row: 1 / 3; grid-column: 3; display: flex; flex-direction: column; background: #f0f0ee;}
.split{height: 10px; margin-right: 2px; border: solid #666; border-width: 0 1px 1px 0; background: #f4f4f4;}
.arr{display: flex; align-items: center; justify-content: center; height: 17px;}
.arr::before{content: ""; border: 3px solid transparent;}
.up::before{border-bottom-color: #333; border-top: 0;}
.down::before{border-top-color: #333; border-bottom: 0;}
.thumb{display: flex; align-items: center; justify-content: center; border: 1px solid #999; border-radius: 2px;}
.vscroll .thumb{height: 185px; margin: 0 3px 0 1px; background: linear-gradient(90deg, #f6f6f6, #dcdcdf 50%, #c2c2c8);}
.track{flex: 1;}
.nav{height: 17px; width: 16px;}
.nav svg{width: 10px; height: 10px; margin: 0 auto;}
.bars{width: 8px; height: 7px; background: repeating-linear-gradient(90deg, #555 0 2px, transparent 2px 3px);}
.vscroll .bars{width: 7px; height: 8px; background: repeating-linear-gradient(#555 0 2px, transparent 2px 3px);}
.hscroll{grid-column: 1 / 4; margin-left: -1px; display: flex; align-items: center; background: #f0f0ee; border-bottom: 1px solid #fff;}
.hscroll button{flex: none; width: 17px; height: 17px;}
.hscroll svg{width: 10px; height: 10px; margin: 0 auto;}
.hscroll .on{background: #fbb873; border: 1px solid #2b2040;}
.hscroll .thumb{flex: 1; height: 15px; background: linear-gradient(#f4f4f4, #dcdce0 50%, #bcbcc4);}
.hscroll .prev{width: 20px;}
.prev::before{border-right-color: #333; border-left: 0;}
.next::before{border-left-color: #333; border-right: 0;}
.hscroll .next{margin-right: 21px;}

/* 绘图栏和状态栏 */
.drawdock{flex: none; height: 28px; border-bottom: 1px solid #7b8fae; background: linear-gradient(90deg, #9ebef5, #c4daf9 60%);}
.drawdock .toolbar{margin: 0 0 0 5px;}
.status{flex: none; height: 6px; overflow: hidden; display: flex; gap: 2px; padding: 2px 5px 0; background: #f0eee8; color: #000;}
.status span{height: 20px; border: 1px solid #c5bfae; flex: none; line-height: 16px; padding: 0 3px;}
.status em{font-style: normal;}
.s1{width: 197px; display: flex; justify-content: space-around;}
.status .s2{width: 226px; display: flex; justify-content: space-between;}
.status .dim{color: #aaa; width: 31px;}
.status .lang{width: 68px;}
.status .spell{width: 44px; padding-left: 12px;}
.spell svg{width: 16px; height: 16px;}
.status .box{width: 38px;}
.status .sm{width: 28px;}

.watermark{position: absolute; right: 66px; bottom: 24px; width: 260px; height: 130px; opacity: .72; pointer-events: none;}
.mark{fill: #fff; stroke: #9a9aaa; stroke-opacity: .4;}
.bai{font: bold 54px "Liberation Sans", sans-serif;}
.jy{font: bold 41px "Noto Sans CJK SC", sans-serif;}
.url{font: 28px "Open Sans", sans-serif; fill: #fff; stroke: #c4c4cc; stroke-width: 2px; stroke-opacity: .5; paint-order: stroke;}
.du{font: bold 32px "Liberation Sans", sans-serif; fill: #7f89a2;}
```
